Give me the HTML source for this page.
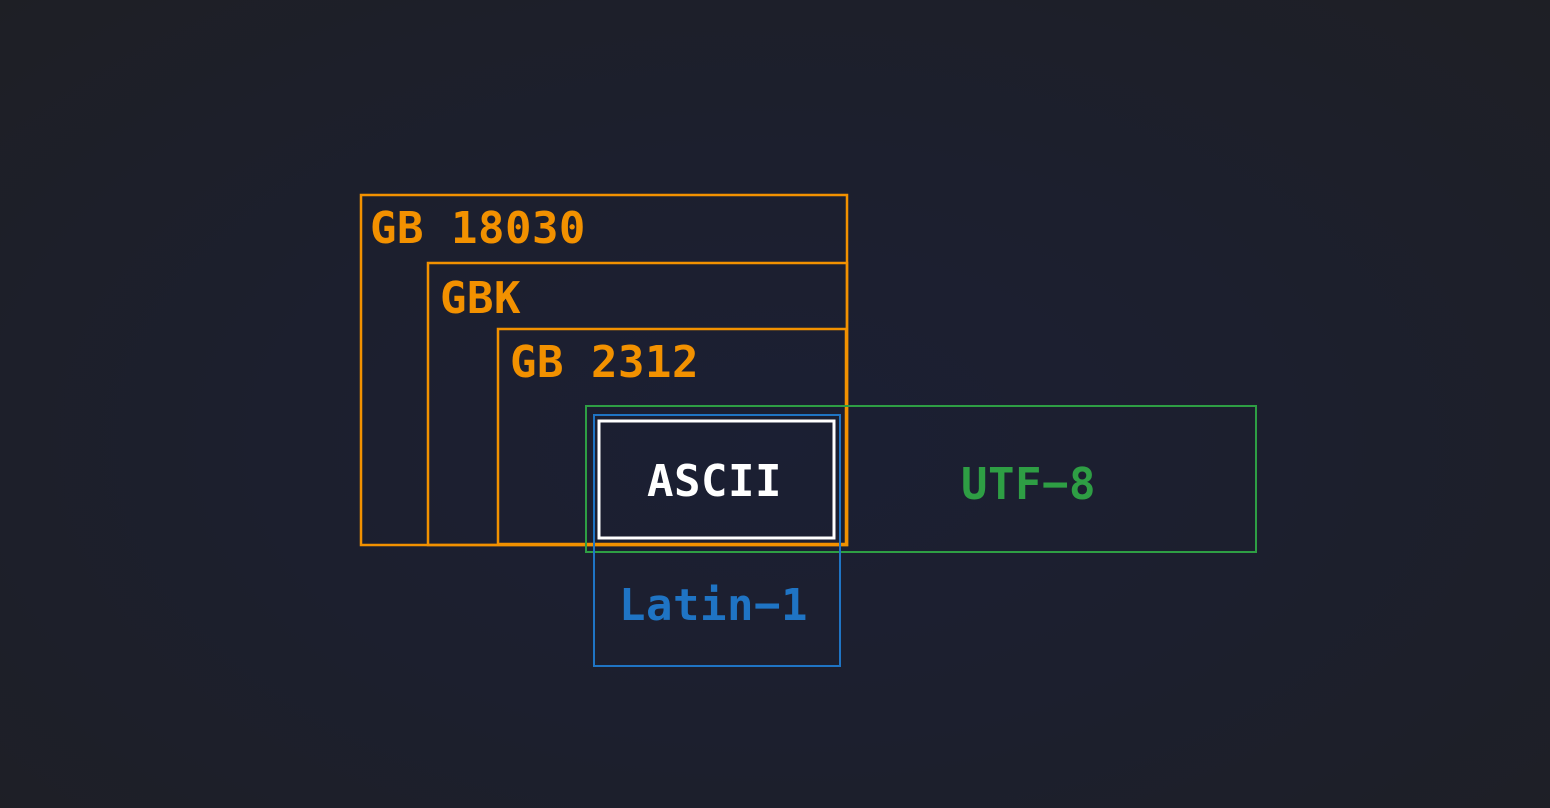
<!DOCTYPE html>
<html><head><style>
html,body{margin:0;padding:0;width:1550px;height:808px;overflow:hidden;background:radial-gradient(ellipse at 50% 55%,#1b1f33 0%,#1c1f2e 45%,#1e1f25 100%);}
svg{display:block}
text{font-family:"DejaVu Sans Mono","Liberation Mono",monospace;font-weight:bold;font-size:44px;letter-spacing:0.5px}
</style></head><body>
<svg width="1550" height="808" xmlns="http://www.w3.org/2000/svg">
<g fill="none" stroke="#f29100" stroke-width="2.5">
<rect x="361" y="195" width="486" height="350"/>
<rect x="428" y="263" width="419" height="282"/>
<rect x="498" y="329" width="348" height="215"/>
</g>
<rect x="586" y="406" width="670" height="146" fill="none" stroke="#2e9e44" stroke-width="2"/>
<rect x="594" y="415" width="246" height="251" fill="none" stroke="#1f74c4" stroke-width="2"/>
<rect x="599" y="421" width="235" height="117" fill="none" stroke="#ffffff" stroke-width="3"/>
<text x="370" y="243" fill="#f29100">GB 18030</text>
<text x="440" y="313" fill="#f29100">GBK</text>
<text x="510" y="377" fill="#f29100">GB 2312</text>
<text x="647" y="496" fill="#ffffff">ASCII</text>
<text x="961" y="499" fill="#2e9e44">UTF−8</text>
<text x="619" y="620" fill="#1f74c4">Latin−1</text>
</svg>
</body></html>
